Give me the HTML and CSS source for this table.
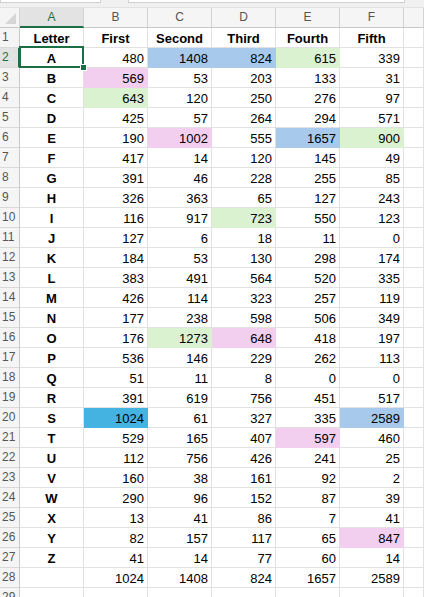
FILE: index.html
```html
<!DOCTYPE html>
<html>
<head>
<meta charset="utf-8">
<link rel="stylesheet" href="styles.css">
</head>
<body>
<div class="topbar"><div class="namebox"></div><div class="formulabox"></div></div>
<div class="sheet">
  <div class="row colhead">
    <div class="corner"><svg width="19" height="19" viewBox="0 0 19 19"><polygon points="16,5 16,16 5,16" fill="#d6d6d6"/></svg></div>
    <div class="ch sel">A</div><div class="ch">B</div><div class="ch">C</div><div class="ch">D</div><div class="ch">E</div><div class="ch">F</div><div class="ch"></div>
  </div>
  <div class="row"><div class="rh">1</div><div class="c b">Letter</div><div class="c b">First</div><div class="c b">Second</div><div class="c b">Third</div><div class="c b">Fourth</div><div class="c b">Fifth</div><div class="c"></div></div>
  <div class="row"><div class="rh sel">2</div><div class="c b active">A</div><div class="c n">480</div><div class="c n blue">1408</div><div class="c n blue">824</div><div class="c n green">615</div><div class="c n">339</div><div class="c"></div></div>
  <div class="row"><div class="rh">3</div><div class="c b">B</div><div class="c n pink">569</div><div class="c n">53</div><div class="c n">203</div><div class="c n">133</div><div class="c n">31</div><div class="c"></div></div>
  <div class="row"><div class="rh">4</div><div class="c b">C</div><div class="c n green">643</div><div class="c n">120</div><div class="c n">250</div><div class="c n">276</div><div class="c n">97</div><div class="c"></div></div>
  <div class="row"><div class="rh">5</div><div class="c b">D</div><div class="c n">425</div><div class="c n">57</div><div class="c n">264</div><div class="c n">294</div><div class="c n">571</div><div class="c"></div></div>
  <div class="row"><div class="rh">6</div><div class="c b">E</div><div class="c n">190</div><div class="c n pink">1002</div><div class="c n">555</div><div class="c n blue">1657</div><div class="c n green">900</div><div class="c"></div></div>
  <div class="row"><div class="rh">7</div><div class="c b">F</div><div class="c n">417</div><div class="c n">14</div><div class="c n">120</div><div class="c n">145</div><div class="c n">49</div><div class="c"></div></div>
  <div class="row"><div class="rh">8</div><div class="c b">G</div><div class="c n">391</div><div class="c n">46</div><div class="c n">228</div><div class="c n">255</div><div class="c n">85</div><div class="c"></div></div>
  <div class="row"><div class="rh">9</div><div class="c b">H</div><div class="c n">326</div><div class="c n">363</div><div class="c n">65</div><div class="c n">127</div><div class="c n">243</div><div class="c"></div></div>
  <div class="row"><div class="rh">10</div><div class="c b">I</div><div class="c n">116</div><div class="c n">917</div><div class="c n green">723</div><div class="c n">550</div><div class="c n">123</div><div class="c"></div></div>
  <div class="row"><div class="rh">11</div><div class="c b">J</div><div class="c n">127</div><div class="c n">6</div><div class="c n">18</div><div class="c n">11</div><div class="c n">0</div><div class="c"></div></div>
  <div class="row"><div class="rh">12</div><div class="c b">K</div><div class="c n">184</div><div class="c n">53</div><div class="c n">130</div><div class="c n">298</div><div class="c n">174</div><div class="c"></div></div>
  <div class="row"><div class="rh">13</div><div class="c b">L</div><div class="c n">383</div><div class="c n">491</div><div class="c n">564</div><div class="c n">520</div><div class="c n">335</div><div class="c"></div></div>
  <div class="row"><div class="rh">14</div><div class="c b">M</div><div class="c n">426</div><div class="c n">114</div><div class="c n">323</div><div class="c n">257</div><div class="c n">119</div><div class="c"></div></div>
  <div class="row"><div class="rh">15</div><div class="c b">N</div><div class="c n">177</div><div class="c n">238</div><div class="c n">598</div><div class="c n">506</div><div class="c n">349</div><div class="c"></div></div>
  <div class="row"><div class="rh">16</div><div class="c b">O</div><div class="c n">176</div><div class="c n green">1273</div><div class="c n pink">648</div><div class="c n">418</div><div class="c n">197</div><div class="c"></div></div>
  <div class="row"><div class="rh">17</div><div class="c b">P</div><div class="c n">536</div><div class="c n">146</div><div class="c n">229</div><div class="c n">262</div><div class="c n">113</div><div class="c"></div></div>
  <div class="row"><div class="rh">18</div><div class="c b">Q</div><div class="c n">51</div><div class="c n">11</div><div class="c n">8</div><div class="c n">0</div><div class="c n">0</div><div class="c"></div></div>
  <div class="row"><div class="rh">19</div><div class="c b">R</div><div class="c n">391</div><div class="c n">619</div><div class="c n">756</div><div class="c n">451</div><div class="c n">517</div><div class="c"></div></div>
  <div class="row"><div class="rh">20</div><div class="c b">S</div><div class="c n cyan">1024</div><div class="c n">61</div><div class="c n">327</div><div class="c n">335</div><div class="c n blue">2589</div><div class="c"></div></div>
  <div class="row"><div class="rh">21</div><div class="c b">T</div><div class="c n">529</div><div class="c n">165</div><div class="c n">407</div><div class="c n pink">597</div><div class="c n">460</div><div class="c"></div></div>
  <div class="row"><div class="rh">22</div><div class="c b">U</div><div class="c n">112</div><div class="c n">756</div><div class="c n">426</div><div class="c n">241</div><div class="c n">25</div><div class="c"></div></div>
  <div class="row"><div class="rh">23</div><div class="c b">V</div><div class="c n">160</div><div class="c n">38</div><div class="c n">161</div><div class="c n">92</div><div class="c n">2</div><div class="c"></div></div>
  <div class="row"><div class="rh">24</div><div class="c b">W</div><div class="c n">290</div><div class="c n">96</div><div class="c n">152</div><div class="c n">87</div><div class="c n">39</div><div class="c"></div></div>
  <div class="row"><div class="rh">25</div><div class="c b">X</div><div class="c n">13</div><div class="c n">41</div><div class="c n">86</div><div class="c n">7</div><div class="c n">41</div><div class="c"></div></div>
  <div class="row"><div class="rh">26</div><div class="c b">Y</div><div class="c n">82</div><div class="c n">157</div><div class="c n">117</div><div class="c n">65</div><div class="c n pink">847</div><div class="c"></div></div>
  <div class="row"><div class="rh">27</div><div class="c b">Z</div><div class="c n">41</div><div class="c n">14</div><div class="c n">77</div><div class="c n">60</div><div class="c n">14</div><div class="c"></div></div>
  <div class="row"><div class="rh">28</div><div class="c"></div><div class="c n">1024</div><div class="c n">1408</div><div class="c n">824</div><div class="c n">1657</div><div class="c n">2589</div><div class="c"></div></div>
  <div class="row"><div class="rh">29</div><div class="c"></div><div class="c"></div><div class="c"></div><div class="c"></div><div class="c"></div><div class="c"></div><div class="c"></div></div>
</div>
</body>
</html>
```

FILE: styles.css
```css
html, body {
  margin: 0;
  padding: 0;
  background: #ffffff;
  overflow: hidden;
}
body {
  font-family: "Liberation Sans", Arial, sans-serif;
  width: 424px;
  height: 597px;
}
.topbar {
  height: 8px;
  box-sizing: border-box;
  background: #f0f0f0;
  display: flex;
  gap: 27px;
  border-bottom: 1px solid #e2e2e2;
}
.namebox {
  width: 101px;
  height: 3px;
  background: #ffffff;
  border: 1px solid #d0d0d0;
  border-top: none;
  box-sizing: border-box;
}
.formulabox {
  width: 277px;
  height: 3px;
  background: #ffffff;
  border: 1px solid #d0d0d0;
  border-top: none;
  box-sizing: border-box;
}
.sheet {
  display: flex;
  flex-direction: column;
}
.row {
  display: grid;
  grid-template-columns: 20px repeat(6, 64px) 1fr;
  height: 20px;
}
.corner {
  box-sizing: border-box;
  background: #f5f5f5;
  border-right: 1px solid #d4d4d4;
  border-bottom: 1px solid #c8c8c8;
  overflow: hidden;
}
.corner svg { display: block; }
.ch {
  box-sizing: border-box;
  background: #f5f5f5;
  border-right: 1px solid #d4d4d4;
  border-bottom: 1px solid #c8c8c8;
  font-size: 12px;
  line-height: 19px;
  color: #555555;
  text-align: center;
}
.ch.sel {
  background: #e3e3e3;
  color: #1e6e45;
  border-bottom: 2px solid #1e6e45;
  line-height: 18px;
}
.rh {
  box-sizing: border-box;
  background: #f5f5f5;
  border-right: 1px solid #c8c8c8;
  border-bottom: 1px solid #d9d9d9;
  font-size: 12px;
  line-height: 19px;
  color: #555555;
  padding-left: 2px;
}
.rh.sel {
  background: #e3e3e3;
  color: #1e6e45;
  border-right: 2px solid #1e6e45;
}
.c {
  position: relative;
  box-sizing: border-box;
  border-right: 1px solid #e1e1e1;
  border-bottom: 1px solid #e1e1e1;
  font-size: 13px;
  line-height: 15px;
  padding: 3px 3px 0 3px;
  color: #000000;
  white-space: nowrap;
  overflow: visible;
}
.b {
  font-weight: bold;
  text-align: center;
}
.n {
  text-align: right;
}
.blue { background: #a6c9ec; border-color: #a6c9ec; }
.green { background: #daf2d0; border-color: #daf2d0; }
.pink { background: #f2ceef; border-color: #f2ceef; }
.cyan { background: #44b3e1; border-color: #44b3e1; }
.active::after {
  content: "";
  position: absolute;
  top: -2px;
  left: -1px;
  right: -1px;
  bottom: -1px;
  border: 2px solid #1e6e45;
  z-index: 2;
}
.active::before {
  content: "";
  position: absolute;
  width: 5px;
  height: 5px;
  right: -4px;
  bottom: -4px;
  background: #1e6e45;
  border: 1px solid #ffffff;
  z-index: 3;
}
```
